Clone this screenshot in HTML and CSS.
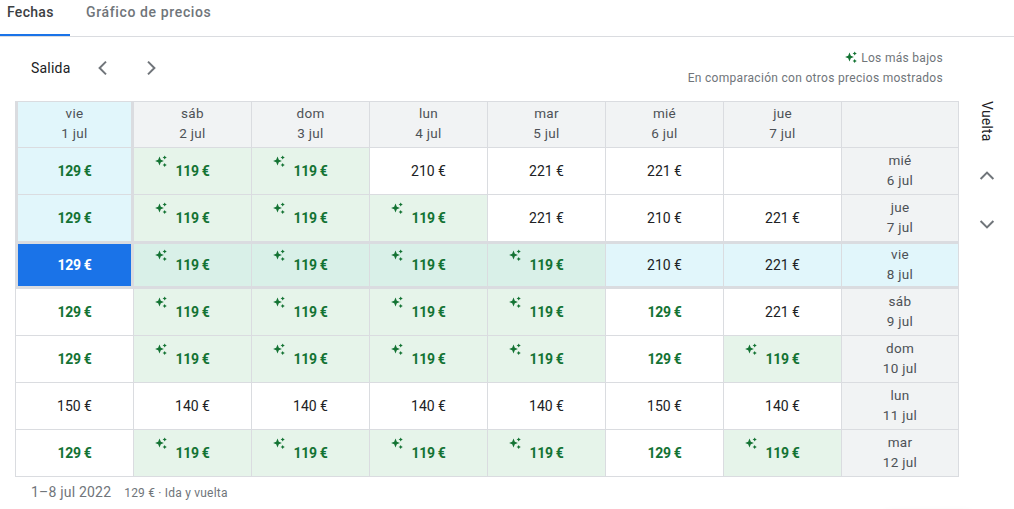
FILE: index.html
```html
<!DOCTYPE html>
<html lang="es">
<head>
<meta charset="UTF-8">
<meta name="viewport" content="width=device-width,initial-scale=1.0">
<title>Fechas</title>
<link rel="stylesheet" href="styles.css">
</head>
<body>

<svg class="defs" width="0" height="0">
  <symbol id="spark" viewBox="0 0 12 12">
    <path d="M4.5 1.6 5.8 4.7 8.9 6 5.8 7.3 4.5 10.4 3.2 7.3 .1 6 3.2 4.7Z"/>
    <path d="M9.7 .4 10.4 1.8 11.8 2.5 10.4 3.2 9.7 4.6 9 3.2 7.6 2.5 9 1.8Z"/>
    <path d="M9.7 7.9 10.4 9.3 11.8 10 10.4 10.7 9.7 12.1 9 10.7 7.6 10 9 9.3Z"/>
  </symbol>
  <symbol id="chev-left" viewBox="0 0 24 24"><path d="M15 5.6 8.6 12l6.4 6.4" /></symbol>
  <symbol id="chev-right" viewBox="0 0 24 24"><path d="M9 5.6 15.4 12 9 18.4" /></symbol>
  <symbol id="chev-up" viewBox="0 0 24 24"><path d="M5.6 15 12 8.6l6.4 6.4" /></symbol>
  <symbol id="chev-down" viewBox="0 0 24 24"><path d="M5.6 9 12 15.4 18.4 9" /></symbol>
</svg>

<!-- ===== Tabs ===== -->
<nav class="tabs">
  <div class="tab active">Fechas</div>
  <div class="tab">Gráfico de precios</div>
</nav>

<!-- ===== Salida + leyenda ===== -->
<div class="toolbar">
  <div class="toolbar-left">
    <strong>Salida</strong>
    <svg class="chev"><use href="#chev-left"/></svg>
    <svg class="chev"><use href="#chev-right"/></svg>
  </div>
  <div class="legend">
    <div><svg class="spark"><use href="#spark"/></svg> Los más bajos</div>
    <div>En comparación con otros precios mostrados</div>
  </div>
</div>

<!-- ===== Tabla de precios ===== -->
<div class="main">
  <div class="grid">
    <div class="cell head col-sel">vie<br>1 jul</div>
    <div class="cell head">sáb<br>2 jul</div>
    <div class="cell head">dom<br>3 jul</div>
    <div class="cell head">lun<br>4 jul</div>
    <div class="cell head">mar<br>5 jul</div>
    <div class="cell head">mié<br>6 jul</div>
    <div class="cell head">jue<br>7 jul</div>
    <div class="cell head"></div>

    <div class="cell col-sel good">129 €</div>
    <div class="cell low"><svg class="spark"><use href="#spark"/></svg>119 €</div>
    <div class="cell low"><svg class="spark"><use href="#spark"/></svg>119 €</div>
    <div class="cell">210 €</div>
    <div class="cell">221 €</div>
    <div class="cell">221 €</div>
    <div class="cell"></div>
    <div class="cell head">mié<br>6 jul</div>

    <div class="cell col-sel good">129 €</div>
    <div class="cell low"><svg class="spark"><use href="#spark"/></svg>119 €</div>
    <div class="cell low"><svg class="spark"><use href="#spark"/></svg>119 €</div>
    <div class="cell low"><svg class="spark"><use href="#spark"/></svg>119 €</div>
    <div class="cell">221 €</div>
    <div class="cell">210 €</div>
    <div class="cell">221 €</div>
    <div class="cell head">jue<br>7 jul</div>

    <div class="cell col-sel row-sel picked">129 €</div>
    <div class="cell row-sel low"><svg class="spark"><use href="#spark"/></svg>119 €</div>
    <div class="cell row-sel low"><svg class="spark"><use href="#spark"/></svg>119 €</div>
    <div class="cell row-sel low"><svg class="spark"><use href="#spark"/></svg>119 €</div>
    <div class="cell row-sel low"><svg class="spark"><use href="#spark"/></svg>119 €</div>
    <div class="cell row-sel">210 €</div>
    <div class="cell row-sel">221 €</div>
    <div class="cell row-sel label">vie<br>8 jul</div>

    <div class="cell good">129 €</div>
    <div class="cell low"><svg class="spark"><use href="#spark"/></svg>119 €</div>
    <div class="cell low"><svg class="spark"><use href="#spark"/></svg>119 €</div>
    <div class="cell low"><svg class="spark"><use href="#spark"/></svg>119 €</div>
    <div class="cell low"><svg class="spark"><use href="#spark"/></svg>119 €</div>
    <div class="cell good">129 €</div>
    <div class="cell">221 €</div>
    <div class="cell head">sáb<br>9 jul</div>

    <div class="cell good">129 €</div>
    <div class="cell low"><svg class="spark"><use href="#spark"/></svg>119 €</div>
    <div class="cell low"><svg class="spark"><use href="#spark"/></svg>119 €</div>
    <div class="cell low"><svg class="spark"><use href="#spark"/></svg>119 €</div>
    <div class="cell low"><svg class="spark"><use href="#spark"/></svg>119 €</div>
    <div class="cell good">129 €</div>
    <div class="cell low"><svg class="spark"><use href="#spark"/></svg>119 €</div>
    <div class="cell head">dom<br>10 jul</div>

    <div class="cell">150 €</div>
    <div class="cell">140 €</div>
    <div class="cell">140 €</div>
    <div class="cell">140 €</div>
    <div class="cell">140 €</div>
    <div class="cell">150 €</div>
    <div class="cell">140 €</div>
    <div class="cell head">lun<br>11 jul</div>

    <div class="cell good">129 €</div>
    <div class="cell low"><svg class="spark"><use href="#spark"/></svg>119 €</div>
    <div class="cell low"><svg class="spark"><use href="#spark"/></svg>119 €</div>
    <div class="cell low"><svg class="spark"><use href="#spark"/></svg>119 €</div>
    <div class="cell low"><svg class="spark"><use href="#spark"/></svg>119 €</div>
    <div class="cell good">129 €</div>
    <div class="cell low"><svg class="spark"><use href="#spark"/></svg>119 €</div>
    <div class="cell head">mar<br>12 jul</div>
  </div>

  <div class="side">
    <div class="vuelta">Vuelta</div>
    <svg class="chev"><use href="#chev-up"/></svg>
    <svg class="chev"><use href="#chev-down"/></svg>
  </div>
</div>

<!-- ===== Resumen ===== -->
<div class="summary">
  <span class="dates">1–8 jul 2022</span>
  <span class="fare">129 € · Ida y vuelta</span>
</div>

<div class="peek"></div>

</body>
</html>
```

FILE: styles.css
```css
:root{
  --line:#dadce0;
  --text:#202124;
  --muted:#70757a;
  --green:#137333;
  --blue:#1a73e8;
  font-family:'Roboto',sans-serif;
}
*{box-sizing:border-box}
body,html{margin:0;padding:0;height:100%;overflow:hidden;background:#fff}
.defs{position:absolute}

/* ===== Tabs ===== */
.tabs{
  display:flex;height:37px;border-bottom:1px solid var(--line);
  font-size:14px;font-weight:500;letter-spacing:.63px;color:var(--muted)
}
.tab{height:36px;padding:4px 0 0 16px}
.tab.active{
  width:70px;padding-left:7px;color:#3c4043;letter-spacing:.3px;
  border-bottom:2px solid var(--blue)
}

/* ===== Toolbar ===== */
.toolbar{
  display:flex;justify-content:space-between;
  height:64px;padding:11px 71px 0 31px
}
.toolbar-left{display:flex;align-items:center;height:40px;font-size:14px;color:var(--text)}
.toolbar-left strong{font-weight:400;width:60px;letter-spacing:.2px}
.toolbar-left .chev{margin-right:24px}
.chev{
  width:24px;height:24px;fill:none;stroke:var(--muted);stroke-width:2;
  display:block
}
.legend{
  text-align:right;font-size:12px;line-height:20px;color:var(--muted);
  letter-spacing:.3px
}
.legend .spark{position:static;display:inline-block;vertical-align:-1px;margin-right:1px}

/* ===== Grid ===== */
.main{display:flex;padding-left:15px}
.grid{
  display:grid;
  grid-template-columns:repeat(7,118px) 117px;
  grid-template-rows:46px repeat(7,47px);
  width:944px;
  border-top:1px solid var(--line);border-left:1px solid var(--line)
}
.cell{
  position:relative;
  display:flex;align-items:center;justify-content:center;text-align:center;
  padding-bottom:1px;
  border-right:1px solid var(--line);border-bottom:1px solid var(--line);
  font-size:14px;font-weight:400;color:var(--text);background:#fff
}
.head,.label{
  font-size:13.5px;font-weight:400;line-height:20px;letter-spacing:.3px;
  color:#4d5156;background:#f1f3f4
}
.head{padding-bottom:3px}
.label{padding-bottom:2px;background:#e1f6fb}
.good,.low,.picked{font-weight:700;letter-spacing:-.3px}
.good,.low{color:var(--green)}
.low{background:#e6f4ea}
.col-sel{
  background:#e1f6fb;
  border-left:2px solid var(--line);border-right:3px solid var(--line)
}
.head.col-sel{background:#e1f6fb}
.row-sel{
  background:#e1f6fb;
  border-top:2px solid var(--line);border-bottom:3px solid var(--line)
}
.row-sel.low{background:#d9f0e8}
.picked{background:var(--blue);color:#fff}
.spark{width:12px;height:12px;fill:var(--green)}
.cell .spark{position:absolute;left:21px;top:7px}
.cell.row-sel .spark{top:5px}

/* ===== Vuelta ===== */
.side{
  display:flex;flex-direction:column;align-items:center;
  margin-left:16px;width:24px
}
.vuelta{
  writing-mode:vertical-rl;font-size:14px;font-weight:400;color:var(--text);
  height:63px;letter-spacing:.2px
}
.side .chev{margin-bottom:24px}

/* ===== Resumen ===== */
.summary{display:flex;align-items:baseline;padding:7px 0 0 31px;color:var(--muted)}
.dates{font-size:14px;letter-spacing:.2px;margin-right:13px}
.fare{font-size:12px;letter-spacing:.2px}

/* sombra de algo que asoma por abajo */
.peek{
  position:fixed;left:885px;top:514px;width:85px;height:20px;
  box-shadow:0 0 8px rgba(60,64,67,.12)
}
```
